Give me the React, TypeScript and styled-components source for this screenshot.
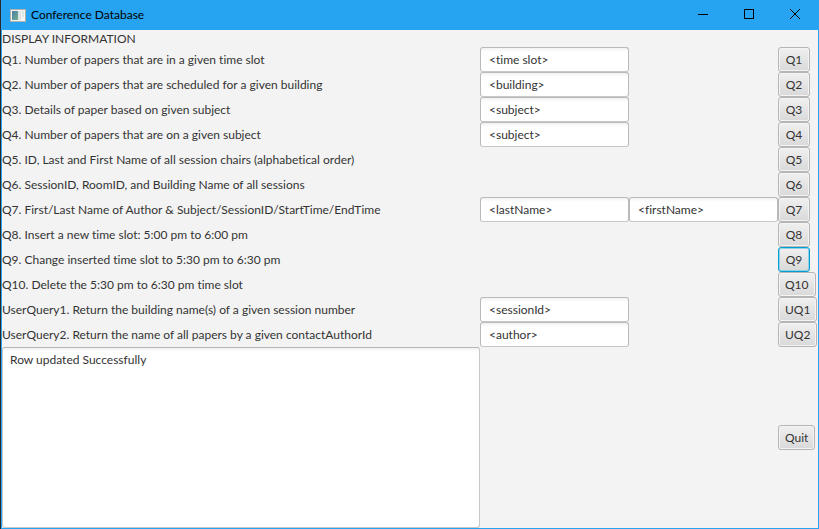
import React, { useState } from "react";
import styled, { createGlobalStyle } from "styled-components";

const GlobalStyle = createGlobalStyle`
  * { box-sizing: border-box; }
  body { margin: 0; }
`;

const Desktop = styled.div`
  min-height: 100vh;
  display: flex;
  background: #2b2b2b;
  padding-left: 1px;
  font-family: Lato, "Open Sans", sans-serif;
  font-variant-ligatures: none;
  font-size: 12px;
  line-height: 16px;
  color: #333333;
`;

const Window = styled.main`
  flex: 1;
  min-width: 0;
  display: flex;
  flex-direction: column;
  border: 1px solid #26a3f1;
  border-top: 0;
  background: #f3f3f3;
`;

const TitleBar = styled.header`
  height: 30px;
  display: flex;
  align-items: center;
  padding-left: 8px;
  background: #26a3f1;
  color: #000000;
`;

const Title = styled.h1`
  flex: 1;
  margin: 0 0 0 5px;
  font-size: 12px;
  font-weight: 400;
`;

const CaptionButton = styled.button`
  width: 46px;
  height: 30px;
  display: flex;
  align-items: center;
  justify-content: center;
  padding: 0 0 2px;
  border: 0;
  background: transparent;
  color: #000000;
`;

const QueryGrid = styled.section`
  flex: 1;
  display: grid;
  grid-template-columns: minmax(0, 1fr) 149px 149px 40px;
  grid-template-rows: 17px repeat(12, 25px) minmax(60px, 1fr);
  align-items: center;
`;

const Heading = styled.h2`
  grid-column: 1 / -1;
  margin: 0;
  font-size: 12px;
  font-weight: 400;
`;

const QueryLabel = styled.label`
  grid-column: 1;
  white-space: nowrap;
`;

const Field = styled.input`
  width: 100%;
  height: 25px;
  padding: 0 8px;
  border: 1px solid #bababa;
  border-bottom-color: #c8c8c8;
  border-radius: 3px;
  background: linear-gradient(to bottom, #f2f2f2, #ffffff 4px);
  font: inherit;
  font-variant-ligatures: none;
  color: #333333;
  outline: none;
`;

const ActionButton = styled.button<{ $active?: boolean }>`
  grid-column: 4;
  justify-self: start;
  height: 25px;
  min-width: 32px;
  padding: 0 6px;
  border: 1px solid ${(p) => (p.$active ? "#039ed3" : "#b5b5b5")};
  border-radius: 3px;
  background: linear-gradient(to bottom, #f0f0f0, #d9d9d9);
  box-shadow: inset 0 0 0 1px ${(p) => (p.$active ? "#8fd0e6" : "#f4f4f4")};
  font: inherit;
  color: #333333;
  white-space: nowrap;
`;

const Output = styled.textarea`
  grid-column: 1;
  align-self: stretch;
  width: 100%;
  padding: 4px 7px;
  border: 1px solid #c8c8c8;
  border-top-color: #b5b5b5;
  border-radius: 3px;
  background: linear-gradient(to bottom, #f2f2f2, #ffffff 4px);
  font: inherit;
  color: #333333;
  resize: none;
  outline: none;
`;

type Query = { id: string; label: string; fields: string[] };

const queries: Query[] = [
  { id: "Q1", label: "Q1. Number of papers that are in a given time slot", fields: ["<time slot>"] },
  { id: "Q2", label: "Q2. Number of papers that are scheduled for a given building", fields: ["<building>"] },
  { id: "Q3", label: "Q3. Details of paper based on given subject", fields: ["<subject>"] },
  { id: "Q4", label: "Q4. Number of papers that are on a given subject", fields: ["<subject>"] },
  { id: "Q5", label: "Q5. ID, Last and First Name of all session chairs (alphabetical order)", fields: [] },
  { id: "Q6", label: "Q6. SessionID, RoomID, and Building Name of all sessions", fields: [] },
  { id: "Q7", label: "Q7. First/Last Name of Author & Subject/SessionID/StartTime/EndTime", fields: ["<lastName>", "<firstName>"] },
  { id: "Q8", label: "Q8. Insert a new time slot: 5:00 pm to 6:00 pm", fields: [] },
  { id: "Q9", label: "Q9. Change inserted time slot to 5:30 pm to 6:30 pm", fields: [] },
  { id: "Q10", label: "Q10. Delete the 5:30 pm to 6:30 pm time slot", fields: [] },
  { id: "UQ1", label: "UserQuery1. Return the building name(s) of a given session number", fields: ["<sessionId>"] },
  { id: "UQ2", label: "UserQuery2. Return the name of all papers by a given contactAuthorId", fields: ["<author>"] },
];

const AppIcon = () => (
  <svg width="16" height="13" viewBox="0 0 16 13" aria-hidden="true">
    <defs>
      <linearGradient id="pane" x1="0" y1="0" x2="1" y2="1">
        <stop offset="0" stopColor="#4c7fa6" />
        <stop offset="1" stopColor="#6fb08a" />
      </linearGradient>
    </defs>
    <rect x="0.5" y="0.5" width="15" height="12" fill="#f4f4f4" stroke="#b4b0ac" />
    <rect x="2" y="2" width="6" height="9" fill="url(#pane)" />
    <rect x="8" y="2" width="3" height="9" fill="#dfe3e3" />
    <rect x="12" y="2" width="2" height="6" fill="#dde8e2" />
  </svg>
);

export default function App() {
  const [active, setActive] = useState("Q9");
  return (
    <>
      <GlobalStyle />
      <Desktop>
        <Window>
          <TitleBar>
            <AppIcon />
            <Title>Conference Database</Title>
            <CaptionButton aria-label="Minimize">
              <svg width="10" height="10"><path d="M0 5.5H10" stroke="currentColor" /></svg>
            </CaptionButton>
            <CaptionButton aria-label="Maximize">
              <svg width="10" height="10"><rect x="0.5" y="0.5" width="9" height="9" fill="none" stroke="currentColor" /></svg>
            </CaptionButton>
            <CaptionButton aria-label="Close">
              <svg width="10" height="10"><path d="M0 0L10 10M10 0L0 10" stroke="currentColor" /></svg>
            </CaptionButton>
          </TitleBar>
          <QueryGrid>
            <Heading>DISPLAY INFORMATION</Heading>
            {queries.map((q) => (
              <React.Fragment key={q.id}>
                <QueryLabel htmlFor={q.fields.length ? `${q.id}-0` : `${q.id}-run`}>{q.label}</QueryLabel>
                {q.fields.map((value, i) => (
                  <Field key={value} id={`${q.id}-${i}`} aria-label={value} defaultValue={value} />
                ))}
                <ActionButton id={`${q.id}-run`} $active={active === q.id} onClick={() => setActive(q.id)}>
                  {q.id}
                </ActionButton>
              </React.Fragment>
            ))}
            <Output aria-label="Result" defaultValue="Row updated Successfully" />
            <ActionButton>Quit</ActionButton>
          </QueryGrid>
        </Window>
      </Desktop>
    </>
  );
}
